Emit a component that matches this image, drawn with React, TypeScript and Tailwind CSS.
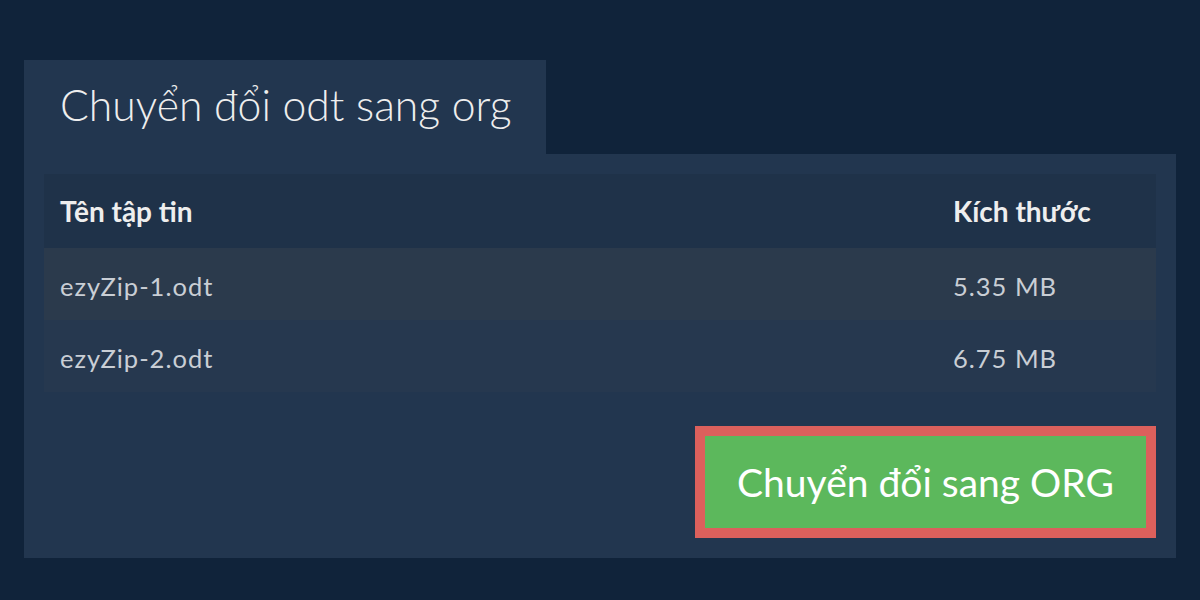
const files = [
  { name: "ezyZip-1.odt", size: "5.35 MB" },
  { name: "ezyZip-2.odt", size: "6.75 MB" },
]

export default function App() {
  return (
    <div className="h-[600px] w-[1200px] bg-[#10233a] px-6 pt-[60px] font-['Lato','Liberation_Sans',sans-serif]">
      <div className="flex">
        <div className="flex h-[94px] w-[522px] items-center bg-[#22364f] pl-9 pb-1">
          <h1 className="text-[42.7px] font-light leading-none text-[#eeeeee]">Chuyển đổi odt sang org</h1>
        </div>
      </div>
      <div className="flex flex-col bg-[#22364f] p-5">
        <div className="flex flex-col">
          <div className="grid h-[74px] grid-cols-[1fr_187px] items-center bg-[#1f3249] px-4 text-[28px] font-bold text-[#eeeeee]">
            <span>Tên tập tin</span>
            <span>Kích thước</span>
          </div>
          {files.map((f, i) => (
            <div
              key={f.name}
              className={
                "grid h-[72px] grid-cols-[1fr_187px] items-center px-4 pt-1 text-[25.5px] tracking-[1px] text-[#c9ced5] " +
                (i % 2 === 0 ? "bg-[#2b3a4c]" : "bg-[#26384f]")
              }
            >
              <span>{f.name}</span>
              <span>{f.size}</span>
            </div>
          ))}
        </div>
        <div className="mt-[34px] flex justify-end">
          <button className="h-[112px] w-[461px] border-[10px] border-[#dc605c] bg-[#5cb85c] text-[39px] text-white">
            Chuyển đổi sang ORG
          </button>
        </div>
      </div>
    </div>
  )
}
